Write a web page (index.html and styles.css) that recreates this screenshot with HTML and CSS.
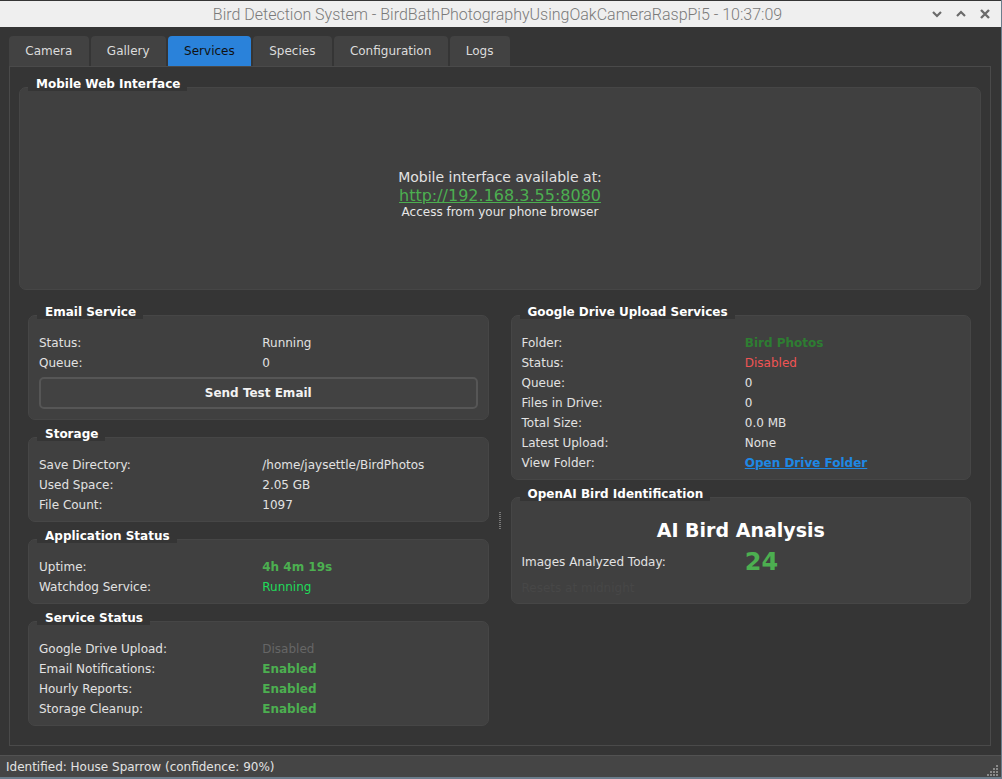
FILE: index.html
```html
<!DOCTYPE html>
<html>
<head>
<meta charset="utf-8">
<link rel="stylesheet" href="styles.css">
</head>
<body>
<div class="window">
  <div class="titlebar">
    <span class="title">Bird Detection System - BirdBathPhotographyUsingOakCameraRaspPi5 - 10:37:09</span>
    <div class="controls">
      <svg width="12" height="12" viewBox="0 0 12 12"><path d="M2 4 L6 8 L10 4" fill="none" stroke="#6a6a6a" stroke-width="2.2"/></svg>
      <svg width="12" height="12" viewBox="0 0 12 12"><path d="M2 8 L6 4 L10 8" fill="none" stroke="#6a6a6a" stroke-width="2.2"/></svg>
      <svg width="12" height="12" viewBox="0 0 12 12"><path d="M2 2 L10 10 M10 2 L2 10" fill="none" stroke="#6a6a6a" stroke-width="2.4"/></svg>
    </div>
  </div>
  <div class="main">
    <div class="tabs">
      <div class="tab">Camera</div>
      <div class="tab">Gallery</div>
      <div class="tab active">Services</div>
      <div class="tab">Species</div>
      <div class="tab">Configuration</div>
      <div class="tab">Logs</div>
    </div>
    <div class="pane">
      <div class="group mobile">
        <div class="gtitle">Mobile Web Interface</div>
        <div class="mobile-body">
          <div class="m1">Mobile interface available at:</div>
          <div class="m2"><span class="url">http://192.168.3.55:8080</span></div>
          <div class="m3">Access from your phone browser</div>
        </div>
      </div>
      <div class="columns">
        <div class="col">
          <div class="group">
            <div class="gtitle">Email Service</div>
            <div class="rows">
              <div class="row"><span>Status:</span><span>Running</span></div>
              <div class="row"><span>Queue:</span><span>0</span></div>
            </div>
            <div class="button">Send Test Email</div>
          </div>
          <div class="group">
            <div class="gtitle">Storage</div>
            <div class="rows">
              <div class="row"><span>Save Directory:</span><span>/home/jaysettle/BirdPhotos</span></div>
              <div class="row"><span>Used Space:</span><span>2.05 GB</span></div>
              <div class="row"><span>File Count:</span><span>1097</span></div>
            </div>
          </div>
          <div class="group">
            <div class="gtitle">Application Status</div>
            <div class="rows">
              <div class="row"><span>Uptime:</span><span class="green bold">4h 4m 19s</span></div>
              <div class="row"><span>Watchdog Service:</span><span class="bright">Running</span></div>
            </div>
          </div>
          <div class="group">
            <div class="gtitle">Service Status</div>
            <div class="rows">
              <div class="row"><span>Google Drive Upload:</span><span class="dim">Disabled</span></div>
              <div class="row"><span>Email Notifications:</span><span class="green bold">Enabled</span></div>
              <div class="row"><span>Hourly Reports:</span><span class="green bold">Enabled</span></div>
              <div class="row"><span>Storage Cleanup:</span><span class="green bold">Enabled</span></div>
            </div>
          </div>
        </div>
        <div class="splitter"><div class="handle"></div></div>
        <div class="col">
          <div class="group">
            <div class="gtitle">Google Drive Upload Services</div>
            <div class="rows">
              <div class="row"><span>Folder:</span><span class="darkgreen bold">Bird Photos</span></div>
              <div class="row"><span>Status:</span><span class="red">Disabled</span></div>
              <div class="row"><span>Queue:</span><span>0</span></div>
              <div class="row"><span>Files in Drive:</span><span>0</span></div>
              <div class="row"><span>Total Size:</span><span>0.0 MB</span></div>
              <div class="row"><span>Latest Upload:</span><span>None</span></div>
              <div class="row"><span>View Folder:</span><span class="link">Open Drive Folder</span></div>
            </div>
          </div>
          <div class="group ai">
            <div class="gtitle">OpenAI Bird Identification</div>
            <div class="ai-head">AI Bird Analysis</div>
            <div class="row ai-row"><span>Images Analyzed Today:</span><span class="count">24</span></div>
            <div class="faint">Resets at midnight</div>
          </div>
        </div>
      </div>
    </div>
  </div>
  <div class="statusbar">
    <span>Identified: House Sparrow (confidence: 90%)</span>
    <svg class="grip" width="12" height="12" viewBox="0 0 12 12" fill="#8a8a8a">
      <rect x="9" y="1" width="2" height="2"/>
      <rect x="6" y="4" width="2" height="2"/><rect x="9" y="4" width="2" height="2"/>
      <rect x="3" y="7" width="2" height="2"/><rect x="6" y="7" width="2" height="2"/><rect x="9" y="7" width="2" height="2"/>
      <rect x="0" y="10" width="2" height="2"/><rect x="3" y="10" width="2" height="2"/><rect x="6" y="10" width="2" height="2"/><rect x="9" y="10" width="2" height="2"/>
    </svg>
  </div>
</div>
</body>
</html>
```

FILE: styles.css
```css
html, body {
  margin: 0;
  padding: 0;
  height: 100%;
}
body {
  background: #6b7d8c;
  font-family: "DejaVu Sans", sans-serif;
  font-size: 12px;
  color: #e2e2e2;
  overflow: hidden;
}
.window {
  width: 1001px;
  height: 777px;
  display: flex;
  flex-direction: column;
  background: #353535;
}
.titlebar {
  height: 26px;
  margin-top: 1px;
  background: #efefef;
  display: flex;
  align-items: center;
  justify-content: center;
  position: relative;
  flex: none;
}
.title {
  font-family: Roboto, "Noto Sans", sans-serif;
  font-weight: 300;
  font-size: 16px;
  color: #7a7a7a;
  margin-left: -6px;
}
.controls {
  position: absolute;
  right: 10px;
  top: 7px;
  display: flex;
  gap: 12px;
}
.main {
  flex: 1;
  display: flex;
  flex-direction: column;
  padding: 9px 10px 9px 9px;
  min-height: 0;
}
.tabs {
  display: flex;
  gap: 2px;
  height: 30px;
  flex: none;
}
.tab {
  background: #424242;
  color: #dcdcdc;
  padding: 0 16.25px;
  line-height: 30px;
  border-radius: 4px 4px 0 0;
  font-size: 12px;
}
.tab.active {
  background: #2a82da;
  color: #111;
}
.pane {
  flex: 1;
  border: 1px solid #4a4a4a;
  padding: 20px 9px 9px 9px;
  display: flex;
  flex-direction: column;
}
.group {
  position: relative;
  background: #404040;
  border: 1px solid #464646;
  border-radius: 7px;
}
.gtitle {
  position: absolute;
  top: -10px;
  left: 8px;
  padding: 0 7px 0 8px;
  line-height: 13px;
  height: 13px;
  background: #353535;
  color: #fff;
  font-weight: bold;
  font-size: 12px;
}
.mobile {
  height: 201px;
  flex: none;
  display: flex;
  align-items: center;
  justify-content: center;
}
.mobile-body {
  text-align: center;
  padding-top: 11px;
}
.m1 { font-size: 14px; line-height: 17px; }
.m2 { font-size: 16px; line-height: 19px; }
.m3 { font-size: 12px; line-height: 15px; color: #e6e6e6; }
.url {
  color: #4caf50;
  text-decoration: underline;
}
.columns {
  display: flex;
  margin-top: 25px;
  padding: 0 10px 0 9px;
}
.col {
  flex: 1;
  display: flex;
  flex-direction: column;
  gap: 17px;
  min-width: 0;
}
.col .group {
  padding: 17px 10px 6px 10px;
}
.splitter {
  width: 22px;
  flex: none;
  display: flex;
  align-items: center;
  justify-content: center;
}
.handle {
  width: 2px;
  height: 17px;
  background: repeating-linear-gradient(to bottom, #7a7a7a 0 1px, transparent 1px 2px);
}
.row {
  display: grid;
  grid-template-columns: 1fr 1fr;
  column-gap: 8px;
  height: 20px;
  line-height: 20px;
  white-space: nowrap;
}
.button {
  margin-top: 4px;
  margin-bottom: 4px;
  height: 28px;
  border: 2px solid #565656;
  border-radius: 5px;
  background: #424242;
  display: flex;
  align-items: center;
  justify-content: center;
  font-weight: bold;
  color: #f2f2f2;
}
.green { color: #4caf50; }
.bold { font-weight: bold; }
.bright { color: #1fdc5a; }
.dim { color: #666; }
.darkgreen { color: #2e7d32; }
.red { color: #f05454; }
.link {
  color: #1e88e5;
  font-weight: bold;
  text-decoration: underline;
}
.col .group.ai {
  padding-bottom: 4px;
}
.ai-head {
  text-align: center;
  font-weight: bold;
  font-size: 19px;
  line-height: 31px;
  color: #fff;
}
.ai-row {
  height: 32px;
  line-height: 32px;
}
.count {
  font-size: 24px;
  font-weight: bold;
  color: #4caf50;
}
.faint {
  line-height: 21px;
  color: #474747;
}
.statusbar {
  height: 21px;
  flex: none;
  border-top: 1px solid #525252;
  background: #454545;
  display: flex;
  align-items: center;
  padding-left: 6px;
  position: relative;
  color: #e2e2e2;
}
.grip {
  position: absolute;
  right: 2px;
  bottom: 1px;
}
```
